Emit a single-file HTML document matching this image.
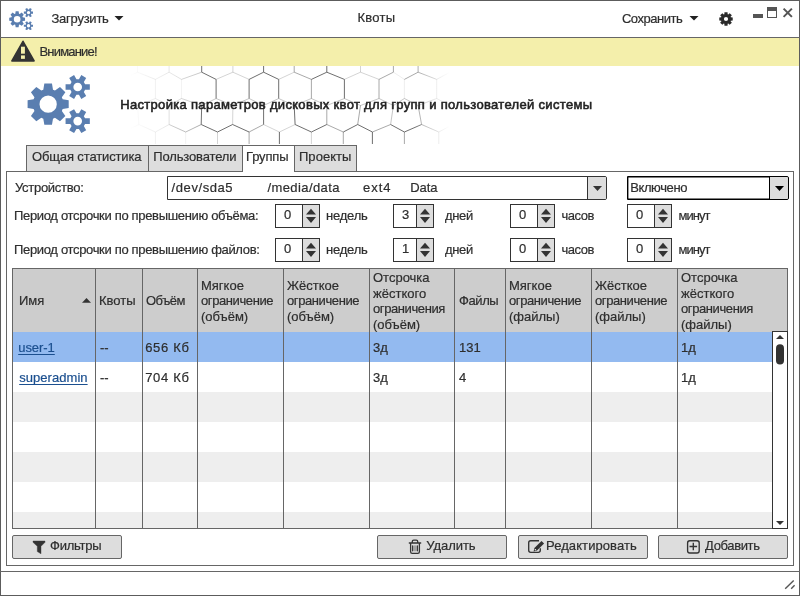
<!DOCTYPE html>
<html><head><meta charset="utf-8">
<style>
*{box-sizing:border-box;margin:0;padding:0}
html,body{width:800px;height:596px;overflow:hidden;background:#fff}
body{position:relative;font-family:"Liberation Sans",sans-serif;font-size:13px;color:#2e2e2e;will-change:transform;-webkit-text-stroke-width:0.2px}
.a{position:absolute}
.t{position:absolute;white-space:nowrap;line-height:16px}
.b{position:absolute;border:1px solid #666}
.tab{position:absolute;top:145px;height:27px;border:1px solid #666;background:#ddd}
.spin{position:absolute;width:44px;height:24px;border:1px solid #555;background:#fff}
.spin .sb{position:absolute;right:0;top:0;width:17px;height:22px;border-left:1px solid #555;background:#ddd}
.btn{position:absolute;top:535px;height:24px;border:1px solid #666;border-radius:2px;background:#ddd}
.vl{position:absolute;top:268px;width:1px;height:260px;background:#555}
.h3{position:absolute;white-space:nowrap;line-height:15.5px}
</style></head><body>
<!-- outer frame -->
<div class="b" style="left:0;top:0;width:800px;height:596px;border-color:#5c5c5c"></div>
<!-- title bar -->
<div class="a" style="left:0;top:37px;width:800px;height:1px;background:#666"></div>
<svg class="a" style="left:8.86px;top:7.58px" width="24.64" height="22.33" viewBox="0 0 64 58">
<g fill="#5a7eb0" fill-rule="evenodd">
<path d="M16.30,14.64 L17.34,8.60 L24.96,8.60 L26.00,14.64 L27.98,15.46 L32.99,11.93 L38.37,17.31 L34.84,22.32 L35.66,24.30 L41.70,25.34 L41.70,32.96 L35.66,34.00 L34.84,35.98 L38.37,40.99 L32.99,46.37 L27.98,42.84 L26.00,43.66 L24.96,49.70 L17.34,49.70 L16.30,43.66 L14.32,42.84 L9.31,46.37 L3.93,40.99 L7.46,35.98 L6.64,34.00 L0.60,32.96 L0.60,25.34 L6.64,24.30 L7.46,22.32 L3.93,17.31 L9.31,11.93 L14.32,15.46Z M12.50,29.15 a8.65,8.65 0 1,0 17.3,0 a8.65,8.65 0 1,0 -17.3,0Z"/>
<path d="M51.94,4.20 L54.34,0.09 L59.19,2.89 L56.84,7.03 L58.08,9.17 L62.83,9.20 L62.83,14.80 L58.08,14.83 L56.84,16.97 L59.19,21.11 L54.34,23.91 L51.94,19.80 L49.46,19.80 L47.06,23.91 L42.21,21.11 L44.56,16.97 L43.32,14.83 L38.57,14.80 L38.57,9.20 L43.32,9.17 L44.56,7.03 L42.21,2.89 L47.06,0.09 L49.46,4.20Z M46.37,12.00 a4.33,4.33 0 1,0 8.66,0 a4.33,4.33 0 1,0 -8.66,0Z"/>
<path d="M51.94,38.30 L54.34,34.19 L59.19,36.99 L56.84,41.13 L58.08,43.27 L62.83,43.30 L62.83,48.90 L58.08,48.93 L56.84,51.07 L59.19,55.21 L54.34,58.01 L51.94,53.90 L49.46,53.90 L47.06,58.01 L42.21,55.21 L44.56,51.07 L43.32,48.93 L38.57,48.90 L38.57,43.30 L43.32,43.27 L44.56,41.13 L42.21,36.99 L47.06,34.19 L49.46,38.30Z M46.37,46.10 a4.33,4.33 0 1,0 8.66,0 a4.33,4.33 0 1,0 -8.66,0Z"/>
</g></svg>
<div class="t" style="left:51.50px;top:10.6px;letter-spacing:-0.25px">Загрузить</div>
<svg class="a" style="left:114px;top:15px" width="10" height="6"><path d="M0.5,1 H9.5 L5,5.6Z" fill="#222"/></svg>
<div class="t" style="left:357.50px;top:10px;letter-spacing:0.25px">Квоты</div>
<div class="t" style="left:621.90px;top:10.6px;letter-spacing:-0.45px">Сохранить</div>
<svg class="a" style="left:689px;top:15px" width="10" height="6"><path d="M0.5,1 H9.5 L5,5.6Z" fill="#222"/></svg>
<!-- settings gear -->
<svg class="a" style="left:718px;top:11px" width="16" height="16" viewBox="0 0 16 16">
<path fill="#2a2a2a" fill-rule="evenodd" d="M6.34,3.18 L6.45,1.28 L9.55,1.28 L9.66,3.18 L10.24,3.42 L11.66,2.15 L13.85,4.34 L12.58,5.76 L12.82,6.34 L14.72,6.45 L14.72,9.55 L12.82,9.66 L12.58,10.24 L13.85,11.66 L11.66,13.85 L10.24,12.58 L9.66,12.82 L9.55,14.72 L6.45,14.72 L6.34,12.82 L5.76,12.58 L4.34,13.85 L2.15,11.66 L3.42,10.24 L3.18,9.66 L1.28,9.55 L1.28,6.45 L3.18,6.34 L3.42,5.76 L2.15,4.34 L4.34,2.15 L5.76,3.42Z M5.90,8.00 a2.1,2.1 0 1,0 4.2,0 a2.1,2.1 0 1,0 -4.2,0Z"/>
</svg>
<!-- window controls -->
<div class="a" style="left:753px;top:14px;width:10px;height:4px;background:#555"></div>
<div class="a" style="left:767px;top:7px;width:10px;height:11px;border:1px solid #555;border-top:4px solid #555"></div>
<svg class="a" style="left:782px;top:7px" width="12" height="12"><path d="M1.6,1.6 L9.9,9.9 M9.9,1.6 L1.6,9.9" stroke="#555" stroke-width="2"/></svg>

<!-- warning bar -->
<div class="a" style="left:1px;top:38px;width:798px;height:28px;background:#f4efab"></div>
<svg class="a" style="left:0;top:30px" width="40" height="36" viewBox="0 30 40 36">
<path d="M23,41.3 L34.1,60.9 H11.9Z" fill="#333" stroke="#333" stroke-width="1.6" stroke-linejoin="round"/>
<rect x="21" y="46.7" width="3.9" height="7" fill="#f4efab"/>
<rect x="21" y="55.4" width="3.9" height="3.45" fill="#f4efab"/>
</svg>
<div class="t" style="left:39.50px;top:43.9px;letter-spacing:-0.82px">Внимание!</div>

<!-- header -->
<svg class="a" style="left:100px;top:66px" width="380" height="78" viewBox="0 0 380 78">
<defs>
<linearGradient id="fg" x1="0" y1="0" x2="380" y2="0" gradientUnits="userSpaceOnUse">
<stop offset="0.08" stop-color="#fff" stop-opacity="0"/>
<stop offset="0.27" stop-color="#fff" stop-opacity="1"/>
<stop offset="0.83" stop-color="#fff" stop-opacity="1"/>
<stop offset="0.92" stop-color="#fff" stop-opacity="0"/>
</linearGradient>
<mask id="fm"><rect x="0" y="0" width="380" height="78" fill="url(#fg)"/></mask>
</defs>
<g mask="url(#fm)" fill="none" stroke="#555" stroke-width="0.85"><path d="M6.0,-6.0L6.0,6.2" stroke-opacity="0.4"/><path d="M6.0,6.2L22.0,13.4" stroke-opacity="0.4"/><path d="M22.0,13.4L22.0,32.5" stroke-opacity="0.4"/><path d="M22.0,32.5L6.0,39.5" stroke-opacity="0.4"/><path d="M22.0,32.5L37.5,39.5" stroke-opacity="0.4"/><path d="M6.0,39.5L7.0,58.5" stroke-opacity="0.4"/><path d="M7.0,58.5L23.0,66.0" stroke-opacity="0.4"/><path d="M23.0,66.0L23.0,84.0" stroke-opacity="0.4"/><path d="M37.5,-6.0L37.5,6.2" stroke-opacity="0.4"/><path d="M37.5,6.2L22.0,13.4" stroke-opacity="0.4"/><path d="M37.5,6.2L55.4,13.4" stroke-opacity="0.4"/><path d="M55.4,13.4L55.4,32.5" stroke-opacity="0.3"/><path d="M55.4,32.5L37.5,39.5" stroke-opacity="0.4"/><path d="M55.4,32.5L69.1,39.5" stroke-opacity="0.4"/><path d="M37.5,39.5L38.9,58.5" stroke-opacity="0.4"/><path d="M38.9,58.5L23.0,66.0" stroke-opacity="0.4"/><path d="M38.9,58.5L55.4,66.0" stroke-opacity="0.3"/><path d="M55.4,66.0L55.4,84.0" stroke-opacity="0.3"/><path d="M69.1,-6.0L69.1,6.2" stroke-opacity="0.3"/><path d="M69.1,6.2L55.4,13.4" stroke-opacity="0.3"/><path d="M69.1,6.2L81.5,13.4" stroke-opacity="0.3"/><path d="M81.5,13.4L81.5,32.5" stroke-opacity="0.12"/><path d="M81.5,32.5L69.1,39.5" stroke-opacity="0.4"/><path d="M81.5,32.5L101.7,39.5" stroke-opacity="0.4"/><path d="M69.1,39.5L69.1,58.5" stroke-opacity="0.4"/><path d="M69.1,58.5L55.4,66.0" stroke-opacity="0.3"/><path d="M69.1,58.5L85.7,66.0" stroke-opacity="0.6"/><path d="M85.7,66.0L85.7,84.0" stroke-opacity="0.12"/><path d="M101.7,-6.0L101.7,6.2" stroke-opacity="1.0"/><path d="M101.7,6.2L81.5,13.4" stroke-opacity="0.4"/><path d="M101.7,6.2L116.1,13.4" stroke-opacity="1.0"/><path d="M116.1,13.4L116.1,32.5" stroke-opacity="1.0"/><path d="M116.1,32.5L101.7,39.5" stroke-opacity="0.4"/><path d="M116.1,32.5L132.9,39.5" stroke-opacity="0.4"/><path d="M101.7,39.5L101.2,58.5" stroke-opacity="1.0"/><path d="M101.2,58.5L85.7,66.0" stroke-opacity="0.6"/><path d="M101.2,58.5L117.5,66.0" stroke-opacity="1.0"/><path d="M117.5,66.0L117.5,84.0" stroke-opacity="0.3"/><path d="M132.9,-6.0L132.9,6.2" stroke-opacity="0.3"/><path d="M132.9,6.2L116.1,13.4" stroke-opacity="0.3"/><path d="M132.9,6.2L149.1,13.4" stroke-opacity="0.3"/><path d="M149.1,13.4L149.1,32.5" stroke-opacity="1.0"/><path d="M149.1,32.5L132.9,39.5" stroke-opacity="0.4"/><path d="M149.1,32.5L163.6,39.5" stroke-opacity="0.4"/><path d="M132.9,39.5L132.6,58.5" stroke-opacity="0.3"/><path d="M132.6,58.5L117.5,66.0" stroke-opacity="1.0"/><path d="M132.6,58.5L149.1,66.0" stroke-opacity="1.0"/><path d="M149.1,66.0L149.1,84.0" stroke-opacity="0.6"/><path d="M163.6,-6.0L163.6,6.2" stroke-opacity="1.0"/><path d="M163.6,6.2L149.1,13.4" stroke-opacity="1.0"/><path d="M163.6,6.2L178.7,13.4" stroke-opacity="1.0"/><path d="M178.7,13.4L178.7,32.5" stroke-opacity="1.0"/><path d="M178.7,32.5L163.6,39.5" stroke-opacity="0.4"/><path d="M178.7,32.5L194.2,39.5" stroke-opacity="0.4"/><path d="M163.6,39.5L163.6,58.5" stroke-opacity="1.0"/><path d="M163.6,58.5L149.1,66.0" stroke-opacity="0.6"/><path d="M163.6,58.5L179.4,66.0" stroke-opacity="0.3"/><path d="M179.4,66.0L179.4,84.0" stroke-opacity="1.0"/><path d="M194.2,-6.0L194.2,6.2" stroke-opacity="0.6"/><path d="M194.2,6.2L178.7,13.4" stroke-opacity="0.3"/><path d="M194.2,6.2L211.4,13.4" stroke-opacity="0.6"/><path d="M211.4,13.4L211.4,32.5" stroke-opacity="0.6"/><path d="M211.4,32.5L194.2,39.5" stroke-opacity="0.4"/><path d="M211.4,32.5L226.8,39.5" stroke-opacity="0.4"/><path d="M194.2,39.5L195.1,58.5" stroke-opacity="1.0"/><path d="M195.1,58.5L179.4,66.0" stroke-opacity="0.3"/><path d="M195.1,58.5L211.4,66.0" stroke-opacity="1.0"/><path d="M211.4,66.0L211.4,84.0" stroke-opacity="0.3"/><path d="M226.8,-6.0L226.8,6.2" stroke-opacity="1.0"/><path d="M226.8,6.2L211.4,13.4" stroke-opacity="1.0"/><path d="M226.8,6.2L244.4,13.4" stroke-opacity="1.0"/><path d="M244.4,13.4L244.4,32.5" stroke-opacity="1.0"/><path d="M244.4,32.5L226.8,39.5" stroke-opacity="0.4"/><path d="M244.4,32.5L260.5,39.5" stroke-opacity="0.4"/><path d="M226.8,39.5L226.8,58.5" stroke-opacity="0.6"/><path d="M226.8,58.5L211.4,66.0" stroke-opacity="1.0"/><path d="M226.8,58.5L243.3,66.0" stroke-opacity="0.6"/><path d="M243.3,66.0L243.3,84.0" stroke-opacity="0.6"/><path d="M260.5,-6.0L260.5,6.2" stroke-opacity="0.3"/><path d="M260.5,6.2L244.4,13.4" stroke-opacity="0.3"/><path d="M260.5,6.2L279.0,13.4" stroke-opacity="0.3"/><path d="M279.0,13.4L279.0,32.5" stroke-opacity="0.6"/><path d="M279.0,32.5L260.5,39.5" stroke-opacity="0.4"/><path d="M279.0,32.5L293.4,39.5" stroke-opacity="0.4"/><path d="M260.5,39.5L257.7,58.5" stroke-opacity="0.6"/><path d="M257.7,58.5L243.3,66.0" stroke-opacity="1.0"/><path d="M257.7,58.5L272.4,66.0" stroke-opacity="1.0"/><path d="M272.4,66.0L272.4,84.0" stroke-opacity="1.0"/><path d="M293.4,-6.0L293.4,6.2" stroke-opacity="0.6"/><path d="M293.4,6.2L279.0,13.4" stroke-opacity="0.6"/><path d="M293.4,6.2L304.4,13.4" stroke-opacity="0.12"/><path d="M304.4,13.4L304.4,32.5" stroke-opacity="0.12"/><path d="M304.4,32.5L293.4,39.5" stroke-opacity="0.4"/><path d="M304.4,32.5L318.1,39.5" stroke-opacity="0.4"/><path d="M293.4,39.5L290.6,58.5" stroke-opacity="0.4"/><path d="M290.6,58.5L272.4,66.0" stroke-opacity="0.6"/><path d="M290.6,58.5L304.4,66.0" stroke-opacity="1.0"/><path d="M304.4,66.0L304.4,84.0" stroke-opacity="0.6"/><path d="M318.1,-6.0L318.1,6.2" stroke-opacity="0.6"/><path d="M318.1,6.2L304.4,13.4" stroke-opacity="0.6"/><path d="M318.1,6.2L336.7,13.4" stroke-opacity="0.6"/><path d="M336.7,13.4L336.7,32.5" stroke-opacity="0.3"/><path d="M336.7,32.5L318.1,39.5" stroke-opacity="0.4"/><path d="M336.7,32.5L350.0,39.5" stroke-opacity="0.4"/><path d="M318.1,39.5L321.6,58.5" stroke-opacity="0.6"/><path d="M321.6,58.5L304.4,66.0" stroke-opacity="1.0"/><path d="M321.6,58.5L338.8,66.0" stroke-opacity="0.6"/><path d="M338.8,66.0L338.8,84.0" stroke-opacity="0.4"/><path d="M350.0,-6.0L350.0,6.2" stroke-opacity="0.4"/><path d="M350.0,6.2L336.7,13.4" stroke-opacity="0.4"/><path d="M350.0,6.2L368.0,13.4" stroke-opacity="0.4"/><path d="M368.0,13.4L368.0,32.5" stroke-opacity="0.4"/><path d="M368.0,32.5L350.0,39.5" stroke-opacity="0.4"/><path d="M350.0,39.5L353.0,58.5" stroke-opacity="0.4"/><path d="M353.0,58.5L338.8,66.0" stroke-opacity="0.4"/><path d="M353.0,58.5L370.0,66.0" stroke-opacity="0.4"/><path d="M370.0,66.0L370.0,84.0" stroke-opacity="0.4"/></g>
</svg>
<svg class="a" style="left:27px;top:75px" width="64" height="58" viewBox="0 0 64 58">
<g fill="#5a7eb0" fill-rule="evenodd">
<path d="M16.30,14.64 L17.34,8.60 L24.96,8.60 L26.00,14.64 L27.98,15.46 L32.99,11.93 L38.37,17.31 L34.84,22.32 L35.66,24.30 L41.70,25.34 L41.70,32.96 L35.66,34.00 L34.84,35.98 L38.37,40.99 L32.99,46.37 L27.98,42.84 L26.00,43.66 L24.96,49.70 L17.34,49.70 L16.30,43.66 L14.32,42.84 L9.31,46.37 L3.93,40.99 L7.46,35.98 L6.64,34.00 L0.60,32.96 L0.60,25.34 L6.64,24.30 L7.46,22.32 L3.93,17.31 L9.31,11.93 L14.32,15.46Z M12.50,29.15 a8.65,8.65 0 1,0 17.3,0 a8.65,8.65 0 1,0 -17.3,0Z"/>
<path d="M51.94,4.20 L54.34,0.09 L59.19,2.89 L56.84,7.03 L58.08,9.17 L62.83,9.20 L62.83,14.80 L58.08,14.83 L56.84,16.97 L59.19,21.11 L54.34,23.91 L51.94,19.80 L49.46,19.80 L47.06,23.91 L42.21,21.11 L44.56,16.97 L43.32,14.83 L38.57,14.80 L38.57,9.20 L43.32,9.17 L44.56,7.03 L42.21,2.89 L47.06,0.09 L49.46,4.20Z M46.37,12.00 a4.33,4.33 0 1,0 8.66,0 a4.33,4.33 0 1,0 -8.66,0Z"/>
<path d="M51.94,38.30 L54.34,34.19 L59.19,36.99 L56.84,41.13 L58.08,43.27 L62.83,43.30 L62.83,48.90 L58.08,48.93 L56.84,51.07 L59.19,55.21 L54.34,58.01 L51.94,53.90 L49.46,53.90 L47.06,58.01 L42.21,55.21 L44.56,51.07 L43.32,48.93 L38.57,48.90 L38.57,43.30 L43.32,43.27 L44.56,41.13 L42.21,36.99 L47.06,34.19 L49.46,38.30Z M46.37,46.10 a4.33,4.33 0 1,0 8.66,0 a4.33,4.33 0 1,0 -8.66,0Z"/>
</g></svg>
<div class="t" style="left:120.20px;top:96.5px;color:#222;-webkit-text-stroke-width:0.55px;letter-spacing:0.32px">Настройка параметров дисковых квот для групп и пользователей системы</div>

<!-- panel -->
<div class="b" style="left:6px;top:171px;width:788px;height:395px"></div>
<!-- tabs -->
<div class="tab" style="left:26px;width:123px"></div>
<div class="tab" style="left:148px;width:95px"></div>
<div class="tab" style="left:242px;width:53px;background:#fff;border-bottom:none;height:27px"></div>
<div class="a" style="left:243px;top:171px;width:51px;height:1px;background:#fff"></div>
<div class="tab" style="left:294px;width:63px"></div>
<div class="t" style="left:32.00px;top:149px;letter-spacing:-0.13px">Общая статистика</div>
<div class="t" style="left:153.30px;top:149px;letter-spacing:-0.15px">Пользователи</div>
<div class="t" style="left:246.00px;top:149px;letter-spacing:-0.14px">Группы</div>
<div class="t" style="left:299.00px;top:149px;letter-spacing:0.03px">Проекты</div>

<!-- form -->
<div class="t" style="left:14.90px;top:179.5px;letter-spacing:-0.27px">Устройство:</div>
<div class="t" style="left:14.00px;top:207.7px;letter-spacing:-0.33px">Период отсрочки по превышению объёма:</div>
<div class="t" style="left:14.00px;top:241.7px;letter-spacing:-0.33px">Период отсрочки по превышению файлов:</div>

<div class="a" style="left:167px;top:176px;width:440px;height:24px;border:1px solid #333;border-radius:0 2px 2px 0"></div>
<div class="a" style="left:587px;top:177px;width:19px;height:22px;border-left:1px solid #333;background:#ddd;border-radius:0 1px 1px 0"></div>
<svg class="a" style="left:593px;top:185px" width="10" height="7"><path d="M0,0.9 H9 L4.5,5.9Z" fill="#333"/></svg>
<div class="t" style="left:171.60px;top:180px;letter-spacing:0.57px">/dev/sda5</div>
<div class="t" style="left:267.50px;top:180px;letter-spacing:0.4px">/media/data</div>
<div class="t" style="left:363.00px;top:180px;letter-spacing:1.0px">ext4</div>
<div class="t" style="left:410.20px;top:180px;letter-spacing:-0.08px">Data</div>

<div class="a" style="left:627px;top:176px;width:162px;height:24px;border:1px solid #000;box-shadow:inset 0 0 0 0.4px #000;border-radius:0 2px 2px 0"></div>
<div class="a" style="left:769px;top:177px;width:19px;height:22px;border-left:1px solid #000;background:#ddd;border-radius:0 1px 1px 0"></div>
<svg class="a" style="left:775px;top:185px" width="10" height="7"><path d="M0,0.9 H9 L4.5,5.9Z" fill="#000"/></svg>
<div class="t" style="left:630.20px;top:180px;letter-spacing:-0.39px">Включено</div>
<div class="b" style="left:275px;top:204px;width:45px;height:24px;border-color:#333"></div>
<div class="a" style="left:302px;top:205px;width:17px;height:22px;border-left:1px solid #333;background:#ddd"></div>
<svg class="a" style="left:305.0px;top:204px" width="12" height="24"><path d="M1,10.4 L6,4.85 L11,10.4Z M1,13.1 L11,13.1 L6,18.9Z" fill="#333"/></svg>
<div class="t" style="left:284px;top:207.3px">0</div>
<div class="b" style="left:393px;top:204px;width:41px;height:24px;border-color:#333"></div>
<div class="a" style="left:416px;top:205px;width:17px;height:22px;border-left:1px solid #333;background:#ddd"></div>
<svg class="a" style="left:419.0px;top:204px" width="12" height="24"><path d="M1,10.4 L6,4.85 L11,10.4Z M1,13.1 L11,13.1 L6,18.9Z" fill="#333"/></svg>
<div class="t" style="left:402px;top:207.3px">3</div>
<div class="b" style="left:510px;top:204px;width:45px;height:24px;border-color:#333"></div>
<div class="a" style="left:537px;top:205px;width:17px;height:22px;border-left:1px solid #333;background:#ddd"></div>
<svg class="a" style="left:540.0px;top:204px" width="12" height="24"><path d="M1,10.4 L6,4.85 L11,10.4Z M1,13.1 L11,13.1 L6,18.9Z" fill="#333"/></svg>
<div class="t" style="left:519px;top:207.3px">0</div>
<div class="b" style="left:627px;top:204px;width:45px;height:24px;border-color:#333"></div>
<div class="a" style="left:654px;top:205px;width:17px;height:22px;border-left:1px solid #333;background:#ddd"></div>
<svg class="a" style="left:657.0px;top:204px" width="12" height="24"><path d="M1,10.4 L6,4.85 L11,10.4Z M1,13.1 L11,13.1 L6,18.9Z" fill="#333"/></svg>
<div class="t" style="left:636px;top:207.3px">0</div>
<div class="t" style="left:326.00px;top:207.6px;letter-spacing:-0.2px">недель</div>
<div class="t" style="left:445.00px;top:207.6px;letter-spacing:-0.33px">дней</div>
<div class="t" style="left:561.60px;top:207.6px;letter-spacing:-0.5px">часов</div>
<div class="t" style="left:678.40px;top:207.6px;letter-spacing:-0.95px">минут</div>
<div class="b" style="left:275px;top:238px;width:45px;height:24px;border-color:#333"></div>
<div class="a" style="left:302px;top:239px;width:17px;height:22px;border-left:1px solid #333;background:#ddd"></div>
<svg class="a" style="left:305.0px;top:238px" width="12" height="24"><path d="M1,10.4 L6,4.85 L11,10.4Z M1,13.1 L11,13.1 L6,18.9Z" fill="#333"/></svg>
<div class="t" style="left:284px;top:241.3px">0</div>
<div class="b" style="left:393px;top:238px;width:41px;height:24px;border-color:#333"></div>
<div class="a" style="left:416px;top:239px;width:17px;height:22px;border-left:1px solid #333;background:#ddd"></div>
<svg class="a" style="left:419.0px;top:238px" width="12" height="24"><path d="M1,10.4 L6,4.85 L11,10.4Z M1,13.1 L11,13.1 L6,18.9Z" fill="#333"/></svg>
<div class="t" style="left:402px;top:241.3px">1</div>
<div class="b" style="left:510px;top:238px;width:45px;height:24px;border-color:#333"></div>
<div class="a" style="left:537px;top:239px;width:17px;height:22px;border-left:1px solid #333;background:#ddd"></div>
<svg class="a" style="left:540.0px;top:238px" width="12" height="24"><path d="M1,10.4 L6,4.85 L11,10.4Z M1,13.1 L11,13.1 L6,18.9Z" fill="#333"/></svg>
<div class="t" style="left:519px;top:241.3px">0</div>
<div class="b" style="left:627px;top:238px;width:45px;height:24px;border-color:#333"></div>
<div class="a" style="left:654px;top:239px;width:17px;height:22px;border-left:1px solid #333;background:#ddd"></div>
<svg class="a" style="left:657.0px;top:238px" width="12" height="24"><path d="M1,10.4 L6,4.85 L11,10.4Z M1,13.1 L11,13.1 L6,18.9Z" fill="#333"/></svg>
<div class="t" style="left:636px;top:241.3px">0</div>
<div class="t" style="left:326.00px;top:241.6px;letter-spacing:-0.2px">недель</div>
<div class="t" style="left:445.00px;top:241.6px;letter-spacing:-0.33px">дней</div>
<div class="t" style="left:561.60px;top:241.6px;letter-spacing:-0.5px">часов</div>
<div class="t" style="left:678.40px;top:241.6px;letter-spacing:-0.95px">минут</div>
<div class="a" style="left:13px;top:269px;width:774px;height:63px;background:#cdcdcd"></div>
<div class="a" style="left:13px;top:332px;width:759px;height:30px;background:#93baf0"></div>
<div class="a" style="left:13px;top:362px;width:759px;height:30px;background:#fff"></div>
<div class="a" style="left:13px;top:392px;width:759px;height:30px;background:#eee"></div>
<div class="a" style="left:13px;top:422px;width:759px;height:30px;background:#fff"></div>
<div class="a" style="left:13px;top:452px;width:759px;height:30px;background:#eee"></div>
<div class="a" style="left:13px;top:482px;width:759px;height:30px;background:#fff"></div>
<div class="a" style="left:13px;top:512px;width:759px;height:16px;background:#eee"></div>
<div class="a" style="left:12px;top:268px;width:776px;height:261px;border:1px solid #666"></div>
<div class="a" style="left:95px;top:268px;width:1px;height:260px;background:#666"></div>
<div class="a" style="left:142px;top:268px;width:1px;height:260px;background:#666"></div>
<div class="a" style="left:197px;top:268px;width:1px;height:260px;background:#666"></div>
<div class="a" style="left:283px;top:268px;width:1px;height:260px;background:#666"></div>
<div class="a" style="left:369px;top:268px;width:1px;height:260px;background:#666"></div>
<div class="a" style="left:454px;top:268px;width:1px;height:260px;background:#666"></div>
<div class="a" style="left:505px;top:268px;width:1px;height:260px;background:#666"></div>
<div class="a" style="left:591px;top:268px;width:1px;height:260px;background:#666"></div>
<div class="a" style="left:677px;top:268px;width:1px;height:260px;background:#666"></div>
<div class="a" style="left:772px;top:331px;width:16px;height:198px;border:1px solid #333;background:#fff"></div>
<svg class="a" style="left:772px;top:331px" width="16" height="198"><path d="M4,8 L8,4 L12,8Z" fill="#333"/><rect x="4" y="13.2" width="8" height="20.3" rx="4" fill="#333"/><path d="M4,190 L12,190 L8,194Z" fill="#333"/></svg>
<div class="h3" style="left:19px;top:293.48px">Имя</div>
<svg class="a" style="left:82px;top:297px" width="10" height="6"><path d="M0,5.8 L4.5,0.9 L9,5.8Z" fill="#333"/></svg>
<div class="h3" style="left:99px;top:293.48px">Квоты</div>
<div class="h3" style="left:146px;top:293.48px"><span style="letter-spacing:-0.5px">Объём</span></div>
<div class="h3" style="left:201px;top:277.98px">Мягкое<br><span style="letter-spacing:-0.4px">ограничение</span><br>(объём)</div>
<div class="h3" style="left:287px;top:277.98px">Жёсткое<br><span style="letter-spacing:-0.4px">ограничение</span><br>(объём)</div>
<div class="h3" style="left:373px;top:270.23px">Отсрочка<br>жёсткого<br><span style="letter-spacing:-0.4px">ограничения</span><br>(объём)</div>
<div class="h3" style="left:459px;top:293.48px"><span style="letter-spacing:-0.4px">Файлы</span></div>
<div class="h3" style="left:509px;top:277.98px">Мягкое<br><span style="letter-spacing:-0.4px">ограничение</span><br>(файлы)</div>
<div class="h3" style="left:595px;top:277.98px">Жёсткое<br><span style="letter-spacing:-0.4px">ограничение</span><br>(файлы)</div>
<div class="h3" style="left:681px;top:270.23px">Отсрочка<br>жёсткого<br><span style="letter-spacing:-0.4px">ограничения</span><br>(файлы)</div>
<div class="t" style="left:18.20px;top:339.5px;color:#1b4f8f;text-decoration:underline;text-underline-offset:2px;text-decoration-skip-ink:none;letter-spacing:-0.04px">user-1</div>
<div class="t" style="left:100px;top:339.5px;">--</div>
<div class="t" style="left:145.20px;top:339.5px;letter-spacing:0.7px">656 Кб</div>
<div class="t" style="left:373px;top:339.5px;">3д</div>
<div class="t" style="left:459px;top:339.5px;">131</div>
<div class="t" style="left:681px;top:339.5px;">1д</div>
<div class="t" style="left:19.20px;top:369.5px;color:#1b4f8f;text-decoration:underline;text-underline-offset:2px;text-decoration-skip-ink:none;letter-spacing:0.05px">superadmin</div>
<div class="t" style="left:100px;top:369.5px;">--</div>
<div class="t" style="left:145.20px;top:369.5px;letter-spacing:0.7px">704 Кб</div>
<div class="t" style="left:373px;top:369.5px;">3д</div>
<div class="t" style="left:459px;top:369.5px;">4</div>
<div class="t" style="left:681px;top:369.5px;">1д</div>
<div class="btn" style="left:12px;width:110px"></div>
<svg class="a" style="left:31px;top:540px" width="16" height="15"><path d="M2,1 H14 V2.3 L10,6.3 V13.8 L6.3,11.6 V6.3 L2,2.3Z" fill="#333" stroke="#333" stroke-width="0.4" stroke-linejoin="round"/></svg>
<div class="t" style="left:50.00px;top:538.25px;letter-spacing:-0.25px">Фильтры</div>
<div class="btn" style="left:377px;width:130px"></div>
<svg class="a" style="left:408px;top:539px" width="14" height="16"><g fill="none" stroke="#333" stroke-width="1.3" stroke-linecap="round"><path d="M1.3,4 H12.7 M4.3,4 V2.6 Q4.3,1.2 5.7,1.2 H8.3 Q9.7,1.2 9.7,2.6 V4 M2.6,4 V12.8 Q2.6,14.4 4.2,14.4 H9.8 Q11.4,14.4 11.4,12.8 V4 M4.7,6.8 V11.8 M9.3,6.8 V11.8"/><path d="M7,6.8 V11.8" stroke-opacity="0.5"/></g></svg>
<div class="t" style="left:426.20px;top:538.25px;letter-spacing:-0.04px">Удалить</div>
<div class="btn" style="left:518px;width:130px"></div>
<svg class="a" style="left:527px;top:539px" width="19" height="16"><g fill="none" stroke="#333" stroke-width="1.35"><path d="M12,1.7 H3.7 Q1.7,1.7 1.7,3.7 V11.3 Q1.7,13.3 3.7,13.3 H11.3 Q13.3,13.3 13.3,11.3 V9.3"/></g><path d="M6.6,12.6 L7.4,9 L14.5,1.9 L17.1,4.5 L10,11.6Z" fill="#333"/><circle cx="8.4" cy="10.7" r="0.8" fill="#eee"/></svg>
<div class="t" style="left:546.00px;top:538.25px;letter-spacing:0.08px">Редактировать</div>
<div class="btn" style="left:658px;width:130px"></div>
<svg class="a" style="left:685px;top:539px" width="16" height="16"><rect x="2.6" y="1.7" width="11.6" height="12.3" rx="2.2" fill="none" stroke="#333" stroke-width="1.35"/><path d="M8.3,3.8 V11.3 M4.5,7.5 H12.1" stroke="#333" stroke-width="1.35"/></svg>
<div class="t" style="left:705.10px;top:538.25px;letter-spacing:-0.37px">Добавить</div>
<div class="a" style="left:0;top:571px;width:800px;height:1px;background:#666"></div>
<svg class="a" style="left:780px;top:576px" width="18" height="16"><path d="M5.2,12.7 L13.7,4.5 M11.2,12.7 L14.6,9.3" stroke="#555" stroke-width="1.4"/></svg>
</body></html>
